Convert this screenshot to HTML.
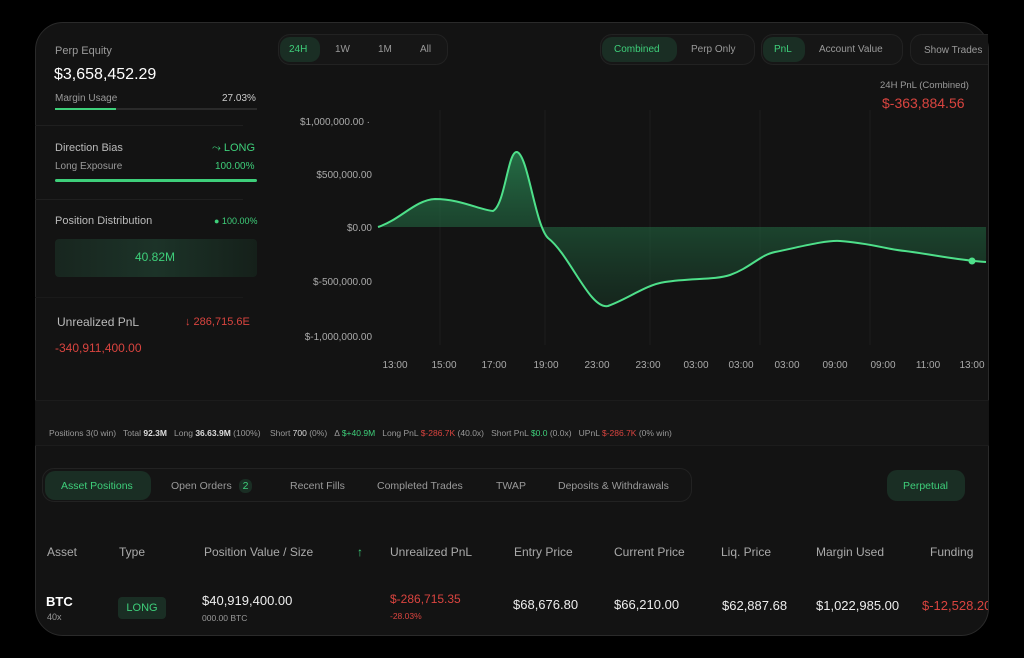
<!DOCTYPE html>
<html><head><meta charset="utf-8"><style>
*{margin:0;padding:0;box-sizing:border-box}
body{width:1024px;height:658px;background:#000;font-family:"Liberation Sans",sans-serif;position:relative;overflow:hidden;color:#ddd}
.card{position:absolute;left:35px;top:22px;width:954px;height:614px;background:#131313;border-radius:28px;border:1px solid #2a2a2a;overflow:hidden}
.a{position:absolute;white-space:nowrap}
.g{color:#3ecf7a}.r{color:#d9443f}.m{color:#9a9a9a}
.pill{position:absolute;border-radius:12px;border:1px solid #222;background:#161616}
.on{background:#1a2e24;color:#3ecf7a;border-radius:10px;position:absolute}
</style></head><body>
<div class="card"></div>
<!-- left panel -->
<div class="a m" style="left:55px;top:45px;font-size:11px">Perp Equity</div>
<div class="a" style="left:54px;top:66px;font-size:16px;color:#fff">$3,658,452.29</div>
<div class="a m" style="left:55px;top:93px;font-size:10px">Margin Usage</div>
<div class="a" style="left:222px;top:93px;font-size:10px;color:#ccc">27.03%</div>
<div class="a" style="left:55px;top:108px;width:202px;height:2px;background:#2a2a2a"></div>
<div class="a" style="left:55px;top:108px;width:61px;height:2px;background:#3ecf7a"></div>
<div class="a" style="left:35px;top:125px;width:208px;height:1px;background:#1f1f1f"></div>
<div class="a" style="left:55px;top:142px;font-size:11px;color:#bbb">Direction Bias</div>
<div class="a g" style="left:212px;top:142px;font-size:11px">⤳ LONG</div>
<div class="a m" style="left:55px;top:161px;font-size:10px">Long Exposure</div>
<div class="a g" style="left:215px;top:161px;font-size:10px">100.00%</div>
<div class="a" style="left:55px;top:179px;width:202px;height:3px;background:#3ecf7a;border-radius:2px"></div>
<div class="a" style="left:35px;top:199px;width:208px;height:1px;background:#1f1f1f"></div>
<div class="a" style="left:55px;top:215px;font-size:11px;color:#bbb">Position Distribution</div>
<div class="a g" style="left:214px;top:216px;font-size:9px">● 100.00%</div>
<div class="a" style="left:55px;top:239px;width:202px;height:38px;background:linear-gradient(90deg,#18261f,#1c3328,#15201a);border-radius:4px"></div>
<div class="a g" style="left:135px;top:250px;font-size:12px">40.82M</div>
<div class="a" style="left:35px;top:297px;width:208px;height:1px;background:#1a1a1a"></div>
<div class="a" style="left:57px;top:315px;font-size:12px;color:#bbb">Unrealized PnL</div>
<div class="a r" style="left:185px;top:316px;font-size:11px">↓ 286,715.6E</div>
<div class="a r" style="left:55px;top:341px;font-size:12px">-340,911,400.00</div>
<!-- top pills -->
<div class="pill" style="left:278px;top:34px;width:170px;height:31px"></div>
<div class="on" style="left:280px;top:37px;width:40px;height:25px"></div>
<div class="a g" style="left:289px;top:44px;font-size:10px">24H</div>
<div class="a m" style="left:335px;top:44px;font-size:10px">1W</div>
<div class="a m" style="left:378px;top:44px;font-size:10px">1M</div>
<div class="a m" style="left:420px;top:44px;font-size:10px">All</div>
<div class="pill" style="left:600px;top:34px;width:155px;height:31px"></div>
<div class="on" style="left:602px;top:37px;width:75px;height:25px"></div>
<div class="a g" style="left:614px;top:44px;font-size:10px">Combined</div>
<div class="a m" style="left:691px;top:44px;font-size:10px">Perp Only</div>
<div class="pill" style="left:761px;top:34px;width:142px;height:31px"></div>
<div class="on" style="left:763px;top:37px;width:42px;height:25px"></div>
<div class="a g" style="left:774px;top:44px;font-size:10px">PnL</div>
<div class="a m" style="left:819px;top:44px;font-size:10px">Account Value</div>
<div class="pill" style="left:910px;top:34px;width:78px;height:31px;border-right:none;border-radius:12px 0 0 12px"></div>
<div class="a m" style="left:924px;top:45px;font-size:10px">Show Trades</div>
<div class="a m" style="left:880px;top:80px;font-size:9.5px">24H PnL (Combined)</div>
<div class="a r" style="left:882px;top:95px;font-size:14px">$-363,884.56</div>
<!-- chart -->
<svg class="a" style="left:0;top:0" width="1024" height="400">
<defs><linearGradient id="gf" x1="0" y1="0" x2="0" y2="1"><stop offset="0" stop-color="#2a8a55" stop-opacity=".75"/><stop offset="1" stop-color="#1a4a30" stop-opacity=".35"/></linearGradient></defs>
<g stroke="#1c1c1c" stroke-width="1">
<line x1="440" y1="110" x2="440" y2="345"/><line x1="545" y1="110" x2="545" y2="345"/><line x1="650" y1="110" x2="650" y2="345"/><line x1="760" y1="110" x2="760" y2="345"/><line x1="870" y1="110" x2="870" y2="345"/>
</g>
<path d="M378,227 C400,220 415,200 435,199 C460,199 480,210 493,211 C505,205 508,150 517,152 C528,155 535,225 548,238 C570,255 590,310 608,306 C630,298 645,285 665,282 C690,278 715,280 730,275 C750,268 760,255 775,252 C800,247 825,240 840,241 C870,243 890,250 905,251 C930,254 955,260 986,262 L986,227 Z" fill="url(#gf)"/>
<path d="M378,227 C400,220 415,200 435,199 C460,199 480,210 493,211 C505,205 508,150 517,152 C528,155 535,225 548,238 C570,255 590,310 608,306 C630,298 645,285 665,282 C690,278 715,280 730,275 C750,268 760,255 775,252 C800,247 825,240 840,241 C870,243 890,250 905,251 C930,254 955,260 986,262" fill="none" stroke="#4ee08a" stroke-width="2"/>
<circle cx="972" cy="261" r="3.5" fill="#4ee08a"/>
<g font-family="Liberation Sans" font-size="10" fill="#aaa" text-anchor="end">
<text x="370" y="125">$1,000,000.00 ·</text><text x="372" y="178">$500,000.00</text><text x="372" y="231">$0.00</text><text x="372" y="285">$-500,000.00</text><text x="372" y="340">$-1,000,000.00</text>
</g>
<g font-family="Liberation Sans" font-size="10" fill="#aaa" text-anchor="middle">
<text x="395" y="368">13:00</text><text x="444" y="368">15:00</text><text x="494" y="368">17:00</text><text x="546" y="368">19:00</text><text x="597" y="368">23:00</text><text x="648" y="368">23:00</text><text x="696" y="368">03:00</text><text x="741" y="368">03:00</text><text x="787" y="368">03:00</text><text x="835" y="368">09:00</text><text x="883" y="368">09:00</text><text x="928" y="368">11:00</text><text x="972" y="368">13:00</text>
</g>
</svg>
<!-- stats bar -->
<div class="a" style="left:35px;top:400px;width:954px;height:46px;background:#151515;border-top:1px solid #1c1c1c;border-bottom:1px solid #1c1c1c"></div>
<div class="a" style="left:49px;top:428px;font-size:8.5px;color:#999">Positions 3(0 win) &nbsp; Total <b style="color:#ddd">92.3M</b> &nbsp; Long <b style="color:#ddd">36.63.9M</b> (100%) &nbsp;&nbsp; Short <span style="color:#ddd">700</span> (0%) &nbsp; Δ <span class="g">$+40.9M</span> &nbsp; Long PnL <span class="r">$-286.7K</span> (40.0x) &nbsp; Short PnL <span class="g">$0.0</span> (0.0x) &nbsp; UPnL <span class="r">$-286.7K</span> (0% win)</div>
<!-- tabs -->
<div class="pill" style="left:42px;top:468px;width:650px;height:34px;background:#141414"></div>
<div class="on" style="left:45px;top:471px;width:106px;height:29px"></div>
<div class="a g" style="left:61px;top:480px;font-size:10.5px">Asset Positions</div>
<div class="a m" style="left:171px;top:480px;font-size:10.5px">Open Orders <span class="g" style="background:#1a2e24;padding:1px 4px;border-radius:6px;margin-left:4px">2</span></div>
<div class="a m" style="left:290px;top:480px;font-size:10.5px">Recent Fills</div>
<div class="a m" style="left:377px;top:480px;font-size:10.5px">Completed Trades</div>
<div class="a m" style="left:496px;top:480px;font-size:10.5px">TWAP</div>
<div class="a m" style="left:558px;top:480px;font-size:10.5px">Deposits &amp; Withdrawals</div>
<div class="on" style="left:887px;top:470px;width:78px;height:31px"></div>
<div class="a g" style="left:903px;top:480px;font-size:10.5px">Perpetual</div>
<!-- table -->
<div style="position:absolute;top:545px;font-size:12px;color:#aaa">
<span class="a" style="left:47px">Asset</span><span class="a" style="left:119px">Type</span><span class="a" style="left:204px">Position Value / Size</span><span class="a g" style="left:357px">↑</span><span class="a" style="left:390px">Unrealized PnL</span><span class="a" style="left:514px">Entry Price</span><span class="a" style="left:614px">Current Price</span><span class="a" style="left:721px">Liq. Price</span><span class="a" style="left:816px">Margin Used</span><span class="a" style="left:930px">Funding</span>
</div>
<div class="a" style="left:46px;top:594px;font-size:13px;color:#fff;font-weight:bold">BTC</div>
<div class="a m" style="left:47px;top:612px;font-size:9px">40x</div>
<div class="a g" style="left:118px;top:597px;width:48px;height:22px;background:#1a2e24;border-radius:4px;font-size:11px;text-align:center;line-height:22px">LONG</div>
<div class="a" style="left:202px;top:593px;font-size:13px;color:#eee">$40,919,400.00</div>
<div class="a m" style="left:202px;top:613px;font-size:8.5px">000.00 BTC</div>
<div class="a r" style="left:390px;top:592px;font-size:12px">$-286,715.35</div>
<div class="a r" style="left:390px;top:611px;font-size:8.5px">-28.03%</div>
<div class="a" style="left:513px;top:597px;font-size:13px;color:#eee">$68,676.80</div>
<div class="a" style="left:614px;top:597px;font-size:13px;color:#eee">$66,210.00</div>
<div class="a" style="left:722px;top:598px;font-size:13px;color:#eee">$62,887.68</div>
<div class="a" style="left:816px;top:598px;font-size:13px;color:#eee">$1,022,985.00</div>
<div class="a r" style="left:922px;top:598px;font-size:13px;width:66px;overflow:hidden">$-12,528.20</div>
</body></html>
